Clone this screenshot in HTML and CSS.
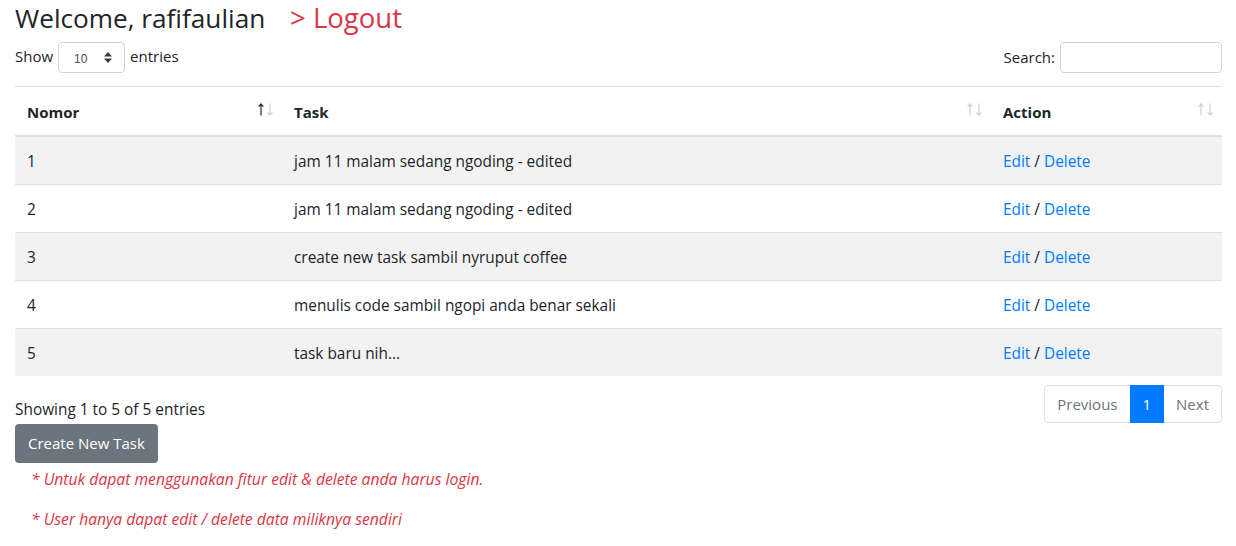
FILE: index.html
```html
<!DOCTYPE html>
<html>
<head>
<meta charset="utf-8">
<link rel="stylesheet" href="styles.css">
</head>
<body>
<div class="container">
  <h3 class="welcome"><span class="hello">Welcome, rafifaulian</span> <a class="logout" href="#">&gt; Logout</a></h3>
  <div class="controls">
    <label class="length">Show
      <span class="select"><span class="select-val">10</span>
        <svg class="select-arrow" width="8" height="11" viewBox="0 0 8 11"><path d="M0 4.5 L4 0 L8 4.5 Z M0 6.5 L4 11 L8 6.5 Z" fill="#343a40"/></svg>
      </span> entries</label>
    <label class="search">Search: <span class="search-input"></span></label>
  </div>
  <table class="table">
    <thead>
      <tr>
        <th class="col-no sorted">Nomor<svg class="sort" width="15" height="13" viewBox="0 0 15 13"><g fill="none" stroke-width="1.2"><path class="up" d="M3 12.5 V1 M0.6 3.6 L3 1 L5.4 3.6"/><path class="down" d="M12 0.5 V12 M9.6 9.4 L12 12 L14.4 9.4"/></g></svg></th>
        <th class="col-task">Task<svg class="sort" width="15" height="13" viewBox="0 0 15 13"><g fill="none" stroke-width="1.2"><path class="up" d="M3 12.5 V1 M0.6 3.6 L3 1 L5.4 3.6"/><path class="down" d="M12 0.5 V12 M9.6 9.4 L12 12 L14.4 9.4"/></g></svg></th>
        <th class="col-action">Action<svg class="sort" width="15" height="13" viewBox="0 0 15 13"><g fill="none" stroke-width="1.2"><path class="up" d="M3 12.5 V1 M0.6 3.6 L3 1 L5.4 3.6"/><path class="down" d="M12 0.5 V12 M9.6 9.4 L12 12 L14.4 9.4"/></g></svg></th>
      </tr>
    </thead>
    <tbody>
      <tr class="odd"><td>1</td><td>jam 11 malam sedang ngoding - edited</td><td><a href="#">Edit</a> / <a href="#">Delete</a></td></tr>
      <tr><td>2</td><td>jam 11 malam sedang ngoding - edited</td><td><a href="#">Edit</a> / <a href="#">Delete</a></td></tr>
      <tr class="odd"><td>3</td><td>create new task sambil nyruput coffee</td><td><a href="#">Edit</a> / <a href="#">Delete</a></td></tr>
      <tr><td>4</td><td>menulis code sambil ngopi anda benar sekali</td><td><a href="#">Edit</a> / <a href="#">Delete</a></td></tr>
      <tr class="odd"><td>5</td><td>task baru nih...</td><td><a href="#">Edit</a> / <a href="#">Delete</a></td></tr>
    </tbody>
  </table>
  <div class="footer-row">
    <div class="info">Showing 1 to 5 of 5 entries</div>
    <ul class="pagination">
      <li class="page disabled">Previous</li>
      <li class="page active">1</li>
      <li class="page disabled">Next</li>
    </ul>
  </div>
  <a class="btn" href="#">Create New Task</a>
  <div class="notes">
    <p class="note">* Untuk dapat menggunakan fitur edit &amp; delete anda harus login.</p>
    <p class="note">* User hanya dapat edit / delete data miliknya sendiri</p>
  </div>
</div>
</body>
</html>
```
FILE: styles.css
```css
* { box-sizing: border-box; }
body {
  margin: 0;
  font-family: "Segoe UI", "Open Sans", "Noto Sans", sans-serif;
  font-size: 16px;
  line-height: 1.5;
  color: #212529;
  background: #fff;
}
a { color: #007bff; text-decoration: none; }
.container { padding: 0 14px 0 15px; }
.welcome {
  margin: 0 0 7px;
  padding-top: 1px;
  font-size: 26.2px;
  font-weight: 400;
  line-height: 33px;
  white-space: nowrap;
}
.logout { color: #dc3545; margin-left: 18px; font-size: 27.5px; }
.controls {
  display: flex;
  justify-content: space-between;
  align-items: center;
  height: 31px;
}
.length, .search { display: flex; align-items: center; gap: 5px; font-size: 15px; }
.length { margin-top: -3px; }
.select {
  display: inline-flex;
  align-items: center;
  justify-content: space-between;
  width: 67px;
  height: 31px;
  border: 1px solid #ced4da;
  border-radius: 4px;
  padding: 0 12px 0 15px;
  font-family: "Liberation Sans", Arial, sans-serif;
  font-size: 12px;
  color: #495057;
  margin-top: 2px;
}
.select-val { padding-top: 4px; }
.search-input {
  display: inline-block;
  width: 162px;
  height: 31px;
  border: 1px solid #ced4da;
  border-radius: 4px;
}
.table {
  width: 100%;
  border-collapse: collapse;
  margin-top: 13px;
}
.table th, .table td {
  padding: 13px 12px 10px;
  text-align: left;
  vertical-align: top;
  border-top: 1px solid #dee2e6;
  line-height: 24px;
}
.table th {
  position: relative;
  font-weight: 700;
  font-size: 15px;
  padding-top: 13px;
  padding-bottom: 11px;
  border-bottom: 2px solid #dee2e6;
}
.table td { font-size: 15.4px; }
.col-no { width: 267px; }
.col-task { width: 709px; }
.table tbody tr.odd { background: #f2f2f2; }
.sort {
  position: absolute;
  right: 9px;
  top: 16px;
  stroke: #cfd2d5;
}
.sorted .sort .up { stroke: #1c2a48; }
.footer-row {
  display: flex;
  justify-content: space-between;
  align-items: flex-start;
  margin-top: 9px;
}
.info { padding-top: 13px; font-size: 15.4px; line-height: 24px; }
.pagination {
  display: flex;
  list-style: none;
  margin: 0;
  padding: 0;
}
.page {
  height: 38px;
  padding: 6px 12px;
  border: 1px solid #dee2e6;
  margin-left: -1px;
  color: #6c757d;
  font-size: 15px;
  line-height: 24px;
}
.page:first-child { border-radius: 4px 0 0 4px; }
.page:last-child { border-radius: 0 4px 4px 0; }
.page.active { background: #007bff; border-color: #007bff; color: #fff; position: relative; }
.btn {
  display: inline-block;
  margin-top: 1px;
  height: 39px;
  padding: 7px 13px;
  background: #6c757d;
  color: #fff;
  border-radius: 4px;
  font-size: 15px;
  line-height: 24px;
}
.notes { padding-left: 16px; margin-top: 4px; }
.note {
  margin: 0 0 16px;
  color: #dc3545;
  font-style: italic;
  font-size: 15.7px;
  line-height: 24px;
}
```
